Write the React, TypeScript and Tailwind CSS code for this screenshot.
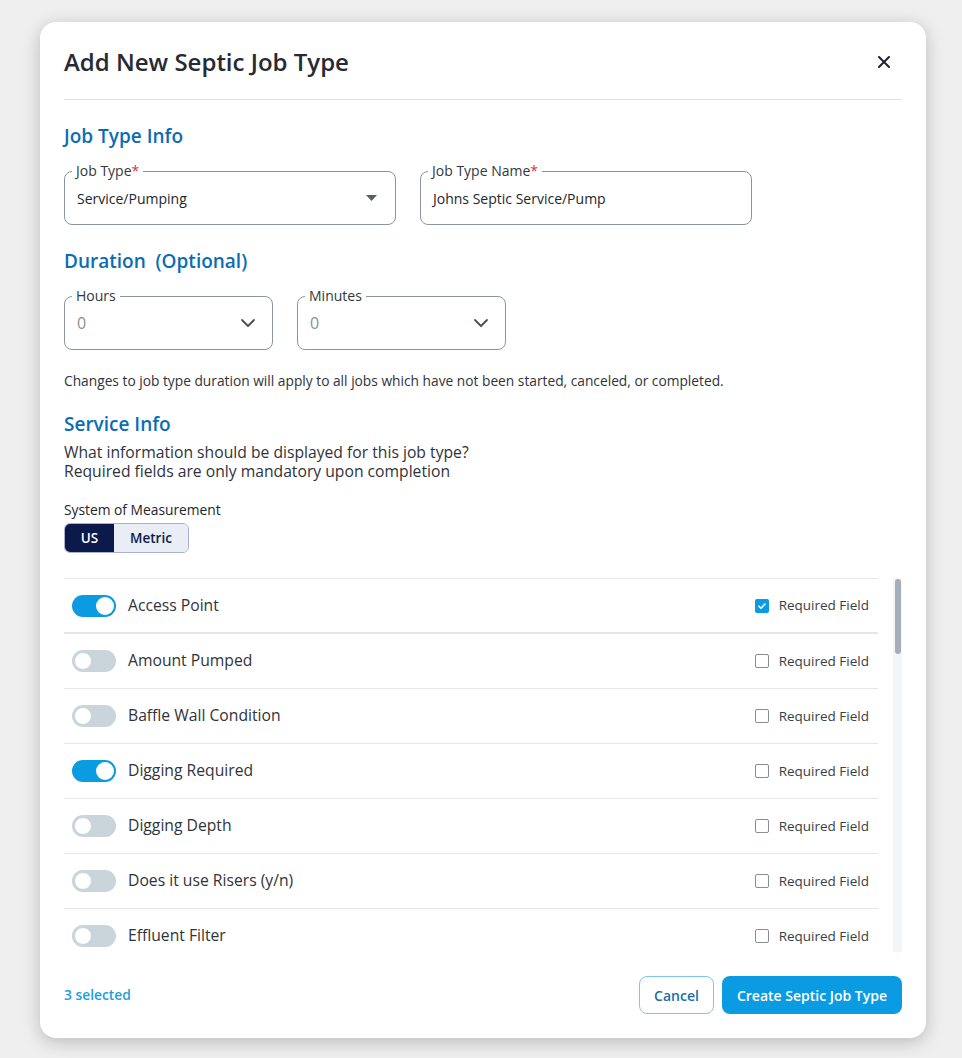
import { useState } from "react";
import clsx from "clsx";

type Field = { label: string; on: boolean; required: boolean };

const fields: Field[] = [
  { label: "Access Point", on: true, required: true },
  { label: "Amount Pumped", on: false, required: false },
  { label: "Baffle Wall Condition", on: false, required: false },
  { label: "Digging Required", on: true, required: false },
  { label: "Digging Depth", on: false, required: false },
  { label: "Does it use Risers (y/n)", on: false, required: false },
  { label: "Effluent Filter", on: false, required: false },
  { label: "Grease Trap", on: false, required: false },
];

function Outlined({
  label,
  required,
  width,
  children,
}: {
  label: string;
  required?: boolean;
  width: string;
  children: React.ReactNode;
}) {
  return (
    <div className={clsx("relative flex h-[54px] items-center rounded-lg border border-[#8b94a1] pl-3 pr-4", width)}>
      <span className="absolute -top-[11px] left-[7px] bg-white px-[4px] text-[14px] leading-[20px] text-[#333840]">
        {label}
        {required ? <span className="text-[#d9343f]">*</span> : null}
      </span>
      {children}
    </div>
  );
}

function Chevron() {
  return (
    <svg width="16" height="10" viewBox="0 0 16 10" fill="none" className="ml-auto">
      <path d="M2 2l6 6 6-6" stroke="#4a4f57" strokeWidth="1.8" strokeLinecap="round" strokeLinejoin="round" />
    </svg>
  );
}

function Toggle({ on }: { on: boolean }) {
  return (
    <div
      className={clsx(
        "flex h-[22px] w-[44px] shrink-0 items-center rounded-full px-[2px]",
        on ? "justify-end bg-[#0b9be3]" : "justify-start bg-[#c9d4db]",
      )}
    >
      <div
        className={clsx(
          "h-[18px] w-[18px] rounded-full bg-white",
          on ? "" : "border border-[#c9d4db]",
        )}
      />
    </div>
  );
}

function Checkbox({ checked }: { checked: boolean }) {
  return checked ? (
    <div className="flex h-[14px] w-[14px] items-center justify-center rounded-[2px] bg-[#0b9be3]">
      <svg width="10" height="8" viewBox="0 0 10 8" fill="none">
        <path d="M2 4.2l2 2 4-4.2" stroke="white" strokeWidth="1.6" strokeLinecap="round" strokeLinejoin="round" />
      </svg>
    </div>
  ) : (
    <div className="h-[14px] w-[14px] rounded-[2px] border-[1.5px] border-[#878c95] bg-white" />
  );
}

export default function App() {
  const [unit, setUnit] = useState<"us" | "metric">("us");
  const selected = fields.filter((f) => f.on).length + 1;

  return (
    <div
      className="min-h-[1058px] bg-[#efefef] pl-[40px] pt-[22px]"
      style={{ fontFamily: '"Open Sans", "Noto Sans", sans-serif' }}
    >
      <div className="flex h-[1016px] w-[886px] flex-col rounded-2xl bg-white px-6 shadow-[0_4px_18px_rgba(0,0,0,0.22)]">
        {/* header */}
        <div className="flex items-center justify-between border-b border-[#dde2e8] pb-[21px] pt-6">
          <h1 className="text-[24px] font-semibold leading-[32px] text-[#262a33]">Add New Septic Job Type</h1>
          <button type="button" className="mr-[6px] flex h-6 w-6 items-center justify-center">
            <svg width="12" height="12" viewBox="0 0 12 12" fill="none">
              <path d="M1 1l10 10M11 1L1 11" stroke="#1f232b" strokeWidth="2" strokeLinecap="round" />
            </svg>
          </button>
        </div>

        {/* job type info */}
        <h2 className="mt-[22px] text-[19px] font-semibold leading-[28px] text-[#0a6db3]">Job Type Info</h2>
        <div className="mt-[21px] flex gap-6">
          <Outlined label="Job Type" required width="w-[332px]">
            <span className="text-[14px] text-[#22262d]">Service/Pumping</span>
            <svg width="11" height="6" viewBox="0 0 11 6" className="ml-auto mr-[2px]">
              <path d="M0 0h11L5.5 6z" fill="#5a5f67" />
            </svg>
          </Outlined>
          <Outlined label="Job Type Name" required width="w-[332px]">
            <span className="text-[14px] text-[#22262d]">Johns Septic Service/Pump</span>
          </Outlined>
        </div>

        {/* duration */}
        <h2 className="mt-[22px] text-[19px] font-semibold leading-[28px] text-[#0a6db3]">Duration&nbsp; (Optional)</h2>
        <div className="mt-[21px] flex gap-6">
          <Outlined label="Hours" width="w-[209px]">
            <span className="text-[16px] text-[#8c9097]">0</span>
            <Chevron />
          </Outlined>
          <Outlined label="Minutes" width="w-[209px]">
            <span className="text-[16px] text-[#8c9097]">0</span>
            <Chevron />
          </Outlined>
        </div>
        <p className="mt-[22px] text-[13.75px] leading-[18px] text-[#2f333a]">
          Changes to job type duration will apply to all jobs which have not been started, canceled, or completed.
        </p>

        {/* service info */}
        <h2 className="mt-5 text-[19px] font-semibold leading-[28px] text-[#0a6db3]">Service Info</h2>
        <p className="mt-[5px] text-[15.7px] leading-[19px] text-[#2f333a]">
          What information should be displayed for this job type?
          <br />
          Required fields are only mandatory upon completion
        </p>
        <div className="mt-5 text-[13.8px] leading-[18px] text-[#22262d]">System of Measurement</div>
        <div className="mt-1 flex h-[30px] w-fit overflow-hidden rounded-md border border-[#a9b3c8] text-[13.5px] font-semibold">
          <button
            type="button"
            onClick={() => setUnit("us")}
            className={clsx(
              "w-[49px]",
              unit === "us" ? "bg-[#0b1a4a] text-white" : "bg-[#e9edf6] text-[#0b1a4a]",
            )}
          >
            US
          </button>
          <button
            type="button"
            onClick={() => setUnit("metric")}
            className={clsx(
              "w-[74px]",
              unit === "metric" ? "bg-[#0b1a4a] text-white" : "bg-[#e9edf6] text-[#0b1a4a]",
            )}
          >
            Metric
          </button>
        </div>

        {/* fields list */}
        <div className="mt-[25px] flex min-h-0 flex-1 gap-[15px]">
          <div className="min-h-0 flex-1 overflow-hidden border-t border-[#e3e6ea]">
            {fields.map((f, i) => (
              <div
                key={f.label}
                className={clsx(
                  "flex h-[55px] items-center pl-2 pr-[9px]",
                  i === 0 ? "border-b-2 border-[#e3e6ea]" : "border-b border-[#e3e6ea]",
                )}
              >
                <Toggle on={f.on} />
                <span className="ml-3 text-[15.7px] text-[#2f333a]">{f.label}</span>
                <div className="ml-auto flex items-center gap-[10px]">
                  <Checkbox checked={f.required} />
                  <span className="text-[13.5px] text-[#3a3e45]">Required Field</span>
                </div>
              </div>
            ))}
          </div>
          <div className="w-[9px] bg-[#f4f5f8] pt-[1px]">
            <div className="mx-auto h-[75px] w-[6px] rounded-full bg-[#a5afb9]" />
          </div>
        </div>

        {/* footer */}
        <div className="flex items-center justify-between pb-6 pt-6">
          <span className="text-[13.8px] font-semibold text-[#1a9fe0]">{selected} selected</span>
          <div className="flex gap-2">
            <button
              type="button"
              className="h-[38px] w-[75px] whitespace-nowrap rounded-lg border border-[#7fc6ee] text-[14px] font-semibold text-[#1b6ea8]"
            >
              Cancel
            </button>
            <button
              type="button"
              className="h-[38px] w-[180px] whitespace-nowrap rounded-lg bg-[#0b9be3] text-[14px] font-semibold text-white"
            >
              Create Septic Job Type
            </button>
          </div>
        </div>
      </div>
    </div>
  );
}
